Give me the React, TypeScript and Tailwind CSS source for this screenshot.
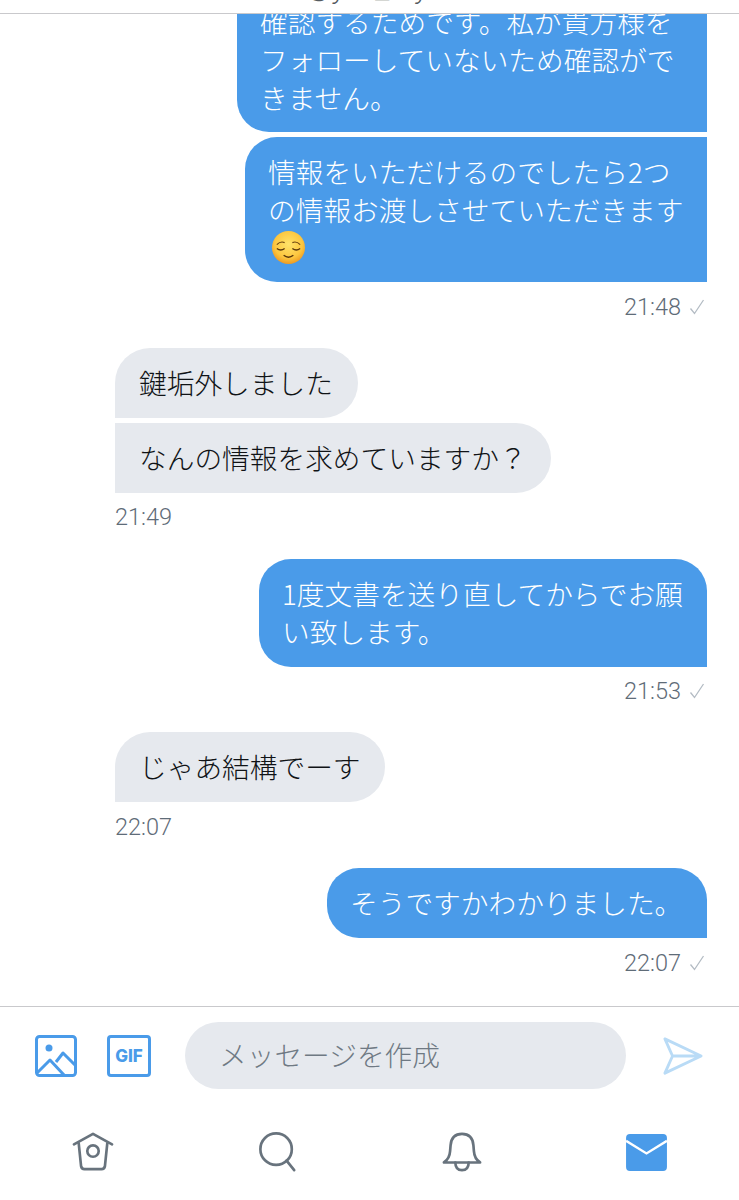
const CJK = "font-['Noto_Sans_CJK_JP','Liberation_Sans',sans-serif]";

function Check() {
  return (
    <svg viewBox="0 0 18 18" className="h-[18px] w-[18px]" fill="none" stroke="#b4bcc4" strokeWidth="1.3">
      <path d="M2.5 10.5 L6.5 15.5 L15.5 2" />
    </svg>
  );
}

function Time({ mine, children }: { mine?: boolean; children: string }) {
  return (
    <div className={`flex h-[24px] items-center gap-[7px] pb-[2px] text-[23.5px] font-light text-[#5f6c78] font-['Roboto',sans-serif] ${mine ? "justify-end pr-[1px]" : ""}`}>
      <span>{children}</span>
      {mine && <Check />}
    </div>
  );
}

function Mine({ className, children }: { className: string; children: React.ReactNode }) {
  return (
    <div className={`self-end whitespace-nowrap rounded-l-[32px] bg-[#4a9be9] pl-[23px] pr-[20px] text-white ${className}`}>
      {children}
    </div>
  );
}

function Theirs({ className, children }: { className: string; children: React.ReactNode }) {
  return (
    <div className={`whitespace-nowrap rounded-r-[35px] bg-[#e6e9ee] pb-[17px] pl-[24px] pr-[20px] pt-[15px] text-[#101316] ${className}`}>
      {children}
    </div>
  );
}

// relieved face
function Emoji() {
  return (
    <svg viewBox="0 0 36 36" className="ml-[3px] h-[35px] w-[35px]" fill="none">
      <defs>
        <radialGradient id="face" cx="50%" cy="40%" r="60%">
          <stop offset="0%" stopColor="#ffe36a" />
          <stop offset="70%" stopColor="#fcc63f" />
          <stop offset="100%" stopColor="#ee9a22" />
        </radialGradient>
      </defs>
      <circle cx="18" cy="18" r="17" fill="url(#face)" />
      <path d="M6 15 Q10 11 14 13 M22 13 Q26 11 30 15" stroke="#6b4310" strokeWidth="1.2" />
      <path d="M6 19 Q10 22 14 19 M22 19 Q26 22 30 19" stroke="#5a370c" strokeWidth="1.4" />
      <path d="M13 26 Q18 30 23 26" stroke="#5a370c" strokeWidth="1.5" />
    </svg>
  );
}

function ImageIcon() {
  return (
    <svg viewBox="0 0 42 42" className="h-[42px] w-[42px]" fill="none" stroke="#4a9be9" strokeWidth="3" strokeLinejoin="round">
      <rect x="1.5" y="1.5" width="39" height="39" rx="3" />
      <circle cx="14" cy="13" r="3.5" fill="#4a9be9" stroke="none" />
      <path d="M2 38 L15 25 L29 40 M21 27 L28 18 L40 30" />
    </svg>
  );
}

function GifIcon() {
  return (
    <div className="flex h-[42px] w-[44px] items-center justify-center rounded-[4px] border-[3px] border-[#4a9be9] text-[17px] font-extrabold text-[#4a9be9] font-['Inter',sans-serif]">
      GIF
    </div>
  );
}

function SendIcon() {
  return (
    <svg viewBox="0 0 42 42" className="h-[40px] w-[40px]" fill="none" stroke="#b9dbf6" strokeWidth="3" strokeLinejoin="round">
      <path d="M2 3 L40 21 L2 39 L10 21 Z M10 21 H40" />
    </svg>
  );
}

function HomeIcon() {
  return (
    <svg viewBox="0 0 44 42" className="h-[40px] w-[42px]" fill="none" stroke="#68737d" strokeWidth="2.8" strokeLinecap="round" strokeLinejoin="round">
      <path d="M2 13 L22 2 L42 13" />
      <path d="M7 12 L9.5 36 Q10 39 13 39 H31 Q34 39 34.5 36 L37 12" />
      <circle cx="22" cy="20" r="6" />
    </svg>
  );
}

function SearchIcon() {
  return (
    <svg viewBox="0 0 42 42" className="h-[40px] w-[40px]" fill="none" stroke="#68737d" strokeWidth="2.8" strokeLinecap="round">
      <circle cx="19" cy="18" r="16.5" />
      <path d="M30 30 L38 40" />
    </svg>
  );
}

function BellIcon() {
  return (
    <svg viewBox="0 0 42 42" className="h-[40px] w-[40px]" fill="none" stroke="#68737d" strokeWidth="2.8" strokeLinecap="round" strokeLinejoin="round">
      <path d="M2 32 H40 Q34 28 33.5 20 L33 14 Q32 2 21 2 Q10 2 9 14 L8.5 20 Q8 28 2 32 Z" />
      <path d="M14 32 Q14 40 21 40 Q28 40 28 32" />
    </svg>
  );
}

function MailIcon() {
  return (
    <svg viewBox="0 0 42 38" className="mt-[2px] h-[37px] w-[41px]">
      <rect width="42" height="38" rx="4" fill="#4a9be9" />
      <path d="M0 7 L21 20 L42 7" fill="none" stroke="#fff" strokeWidth="2.4" />
    </svg>
  );
}

export default function App() {
  return (
    <div className={`flex h-[1200px] w-[739px] flex-col overflow-hidden bg-white text-[27.7px] font-light leading-[38px] ${CJK}`}>
      {/* top bar, only its lower edge is on screen */}
      <div className="h-[14px] shrink-0 overflow-hidden whitespace-nowrap border-b border-[#c9c9cc] pl-[307px] text-[27px] leading-[30px] text-[#555b60]">
        <div className="-mt-[29px]">@yuk_my</div>
      </div>

      <div className="flex flex-1 flex-col overflow-hidden pl-[115px] pr-[32px]">
        {/* the first bubble runs on under the top bar */}
        <Mine className="-mt-[62px] w-[470px] pb-[16px] pt-[50px]">
          <p>確認するためです。私が貴方様を</p>
          <p>フォローしていないため確認がで</p>
          <p>きません。</p>
        </Mine>
        <Mine className="mt-[5px] w-[462px] pb-[16px] pt-[15px]">
          <p>情報をいただけるのでしたら2つ</p>
          <p>の情報お渡しさせていただきます</p>
          <div className="flex h-[38px] items-center"><Emoji /></div>
        </Mine>
        <div className="mt-[14px]"><Time mine>21:48</Time></div>

        <Theirs className="mt-[28px] w-[243px] rounded-tl-[35px]">鍵垢外しました</Theirs>
        <Theirs className="mt-[5px] w-[436px]">なんの情報を求めていますか？</Theirs>
        <div className="mt-[13px]"><Time>21:49</Time></div>

        <Mine className="mt-[29px] w-[448px] rounded-tr-[32px] pb-[17px] pt-[15px]">
          <p>1度文書を送り直してからでお願</p>
          <p>い致します。</p>
        </Mine>
        <div className="mt-[13px]"><Time mine>21:53</Time></div>

        <Theirs className="mt-[28px] w-[270px] rounded-tl-[35px]">じゃあ結構でーす</Theirs>
        <div className="mt-[14px]"><Time>22:07</Time></div>

        <Mine className="mt-[28px] w-[380px] rounded-tr-[32px] pb-[17px] pt-[15px]">そうですかわかりました。</Mine>
        <div className="mt-[14px]"><Time mine>22:07</Time></div>
      </div>

      {/* composer */}
      <div className="flex h-[99px] shrink-0 items-center border-t border-[#c9c9cc] pb-[1px] pl-[35px]">
        <ImageIcon />
        <div className="ml-[30px]"><GifIcon /></div>
        <div className="ml-[34px] flex h-[67px] w-[441px] items-center rounded-full bg-[#e6e9ee] pb-[3px] pl-[34px] text-[#6f7983]">
          メッセージを作成
        </div>
        <div className="ml-[37px]"><SendIcon /></div>
      </div>

      {/* tabs */}
      <div className="grid h-[95px] shrink-0 grid-cols-4 items-start justify-items-center pl-[1px] pt-[27px]">
        <HomeIcon />
        <SearchIcon />
        <BellIcon />
        <MailIcon />
      </div>
    </div>
  );
}
